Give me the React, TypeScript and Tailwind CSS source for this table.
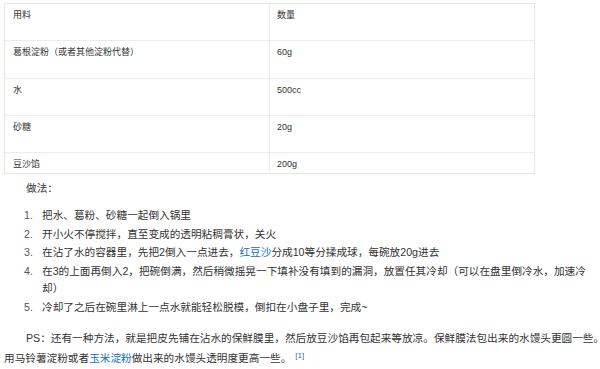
import React from 'react';

const rows = [
  { name: '用料', amount: '数量', h: 'h-[37px]' },
  { name: '葛根淀粉（或者其他淀粉代替）', amount: '60g', h: 'h-[38px]' },
  { name: '水', amount: '500cc', h: 'h-[37px]' },
  { name: '砂糖', amount: '20g', h: 'h-[37px]' },
  { name: '豆沙馅', amount: '200g', h: 'h-[20px]' },
];

const steps: React.ReactNode[] = [
  '把水、葛粉、砂糖一起倒入锅里',
  '开小火不停搅拌，直至变成的透明粘稠膏状，关火',
  <>
    在沾了水的容器里，先把2倒入一点进去，<a className="text-[#136ec2]">红豆沙</a>分成10等分揉成球，每碗放20g进去
  </>,
  '在3的上面再倒入2，把碗倒满，然后稍微摇晃一下填补没有填到的漏洞，放置任其冷却（可以在盘里倒冷水，加速冷却）',
  '冷却了之后在碗里淋上一点水就能轻松脱模，倒扣在小盘子里，完成~',
];

export default function App() {
  return (
    <div className="w-[600px] h-[369px] overflow-hidden bg-white">
      {/* the article column is a little wider than the window */}
      <div
        className="w-[605px] text-[#333] [text-spacing-trim:space-all]"
        style={{ fontFamily: '"Liberation Sans", "Noto Sans CJK SC", sans-serif' }}
      >
        <div className="ml-[4px] mt-[3px] w-[531px] border border-[#e6e6e6] text-[9px] leading-4">
          {rows.map((r, i) => (
            <div
              key={r.name}
              className={`flex ${r.h} ${i < rows.length - 1 ? 'border-b border-[#ececec]' : ''}`}
            >
              <div className="w-[265px] shrink-0 border-r border-[#ececec] pl-2 pt-[3px]">{r.name}</div>
              <div className="flex-1 pl-[7px] pt-[3px]">{r.amount}</div>
            </div>
          ))}
        </div>

        <p className="mt-[5px] pl-[26px] text-[10.65px] leading-[18px]">做法：</p>

        <ol className="mt-[10px] pl-[24px] text-[10.65px] leading-[17.5px]">
          {steps.map((s, i) => (
            <li key={i} className="mb-px flex">
              <span className="w-[18px] shrink-0 text-[#555]">{i + 1}.</span>
              <span>{s}</span>
            </li>
          ))}
        </ol>

        <p className="mt-[13px] pl-[4px] text-[10.65px] leading-[19.5px]">
          <span className="block whitespace-nowrap indent-[22px]">
            PS：还有一种方法，就是把皮先铺在沾水的保鲜膜里，然后放豆沙馅再包起来等放凉。保鲜膜法包出来的水馒头更圆一些。
          </span>
          <span className="block">
            用马铃薯淀粉或者<a className="text-[#136ec2]">玉米淀粉</a>做出来的水馒头透明度更高一些。
            <sup className="ml-[4px] text-[8px] text-[#3366cc]">[1]</sup>
          </span>
        </p>
      </div>
    </div>
  );
}
